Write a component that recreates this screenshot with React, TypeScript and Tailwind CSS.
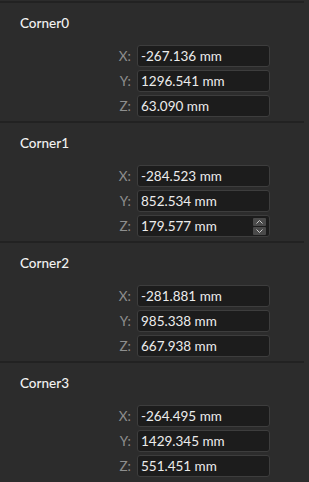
import React from 'react';

type Corner = { name: string; x: string; y: string; z: string; spin?: boolean };

const corners: Corner[] = [
  { name: 'Corner0', x: '-267.136 mm', y: '1296.541 mm', z: '63.090 mm' },
  { name: 'Corner1', x: '-284.523 mm', y: '852.534 mm', z: '179.577 mm', spin: true },
  { name: 'Corner2', x: '-281.881 mm', y: '985.338 mm', z: '667.938 mm' },
  { name: 'Corner3', x: '-264.495 mm', y: '1429.345 mm', z: '551.451 mm' },
];

function Spinner() {
  return (
    <div className="ml-auto mr-[3px] flex flex-col gap-[1px]">
      <div className="flex h-[8px] w-[13px] items-center justify-center rounded-[1px] bg-[#4a4a4a]">
        <svg width="7" height="4" viewBox="0 0 7 4" fill="none">
          <path d="M0.5 3.5 L3.5 0.5 L6.5 3.5" stroke="#c8c8c8" strokeWidth="1" />
        </svg>
      </div>
      <div className="flex h-[8px] w-[13px] items-center justify-center rounded-[1px] bg-[#4a4a4a]">
        <svg width="7" height="4" viewBox="0 0 7 4" fill="none">
          <path d="M0.5 0.5 L3.5 3.5 L6.5 0.5" stroke="#c8c8c8" strokeWidth="1" />
        </svg>
      </div>
    </div>
  );
}

function Field({ label, value, spin }: { label: string; value: string; spin?: boolean }) {
  return (
    <div className="flex items-center">
      <div className="w-[131px] text-right text-[13.5px] text-[#8e8e8e]">{label}</div>
      <div className="ml-[6px] flex h-[22px] w-[133px] items-center rounded-[3px] border border-[#3d3d3d] bg-[#1c1c1c] pl-[3px] text-[13.5px] text-[#ececec]">
        <span>{value}</span>
        {spin && <Spinner />}
      </div>
    </div>
  );
}

export default function App() {
  return (
    <div
      className="h-[482px] w-[309px] overflow-hidden bg-[#2c2c2c]"
      style={{ fontFamily: 'Lato, "Open Sans", sans-serif' }}
    >
      {corners.map((c) => (
        <div key={c.name} className="h-[120px] w-[304px] pt-[1px]">
          <div className="h-[2px] w-full bg-[#222222]" />
          <div className="mt-[10px] pl-[20px] text-[13.5px] leading-[20px] font-medium text-[#f2f2f2]">
            {c.name}
          </div>
          <div className="mt-[12px] flex flex-col gap-[3px]">
            <Field label="X:" value={c.x} />
            <Field label="Y:" value={c.y} />
            <Field label="Z:" value={c.z} spin={c.spin} />
          </div>
        </div>
      ))}
    </div>
  );
}
